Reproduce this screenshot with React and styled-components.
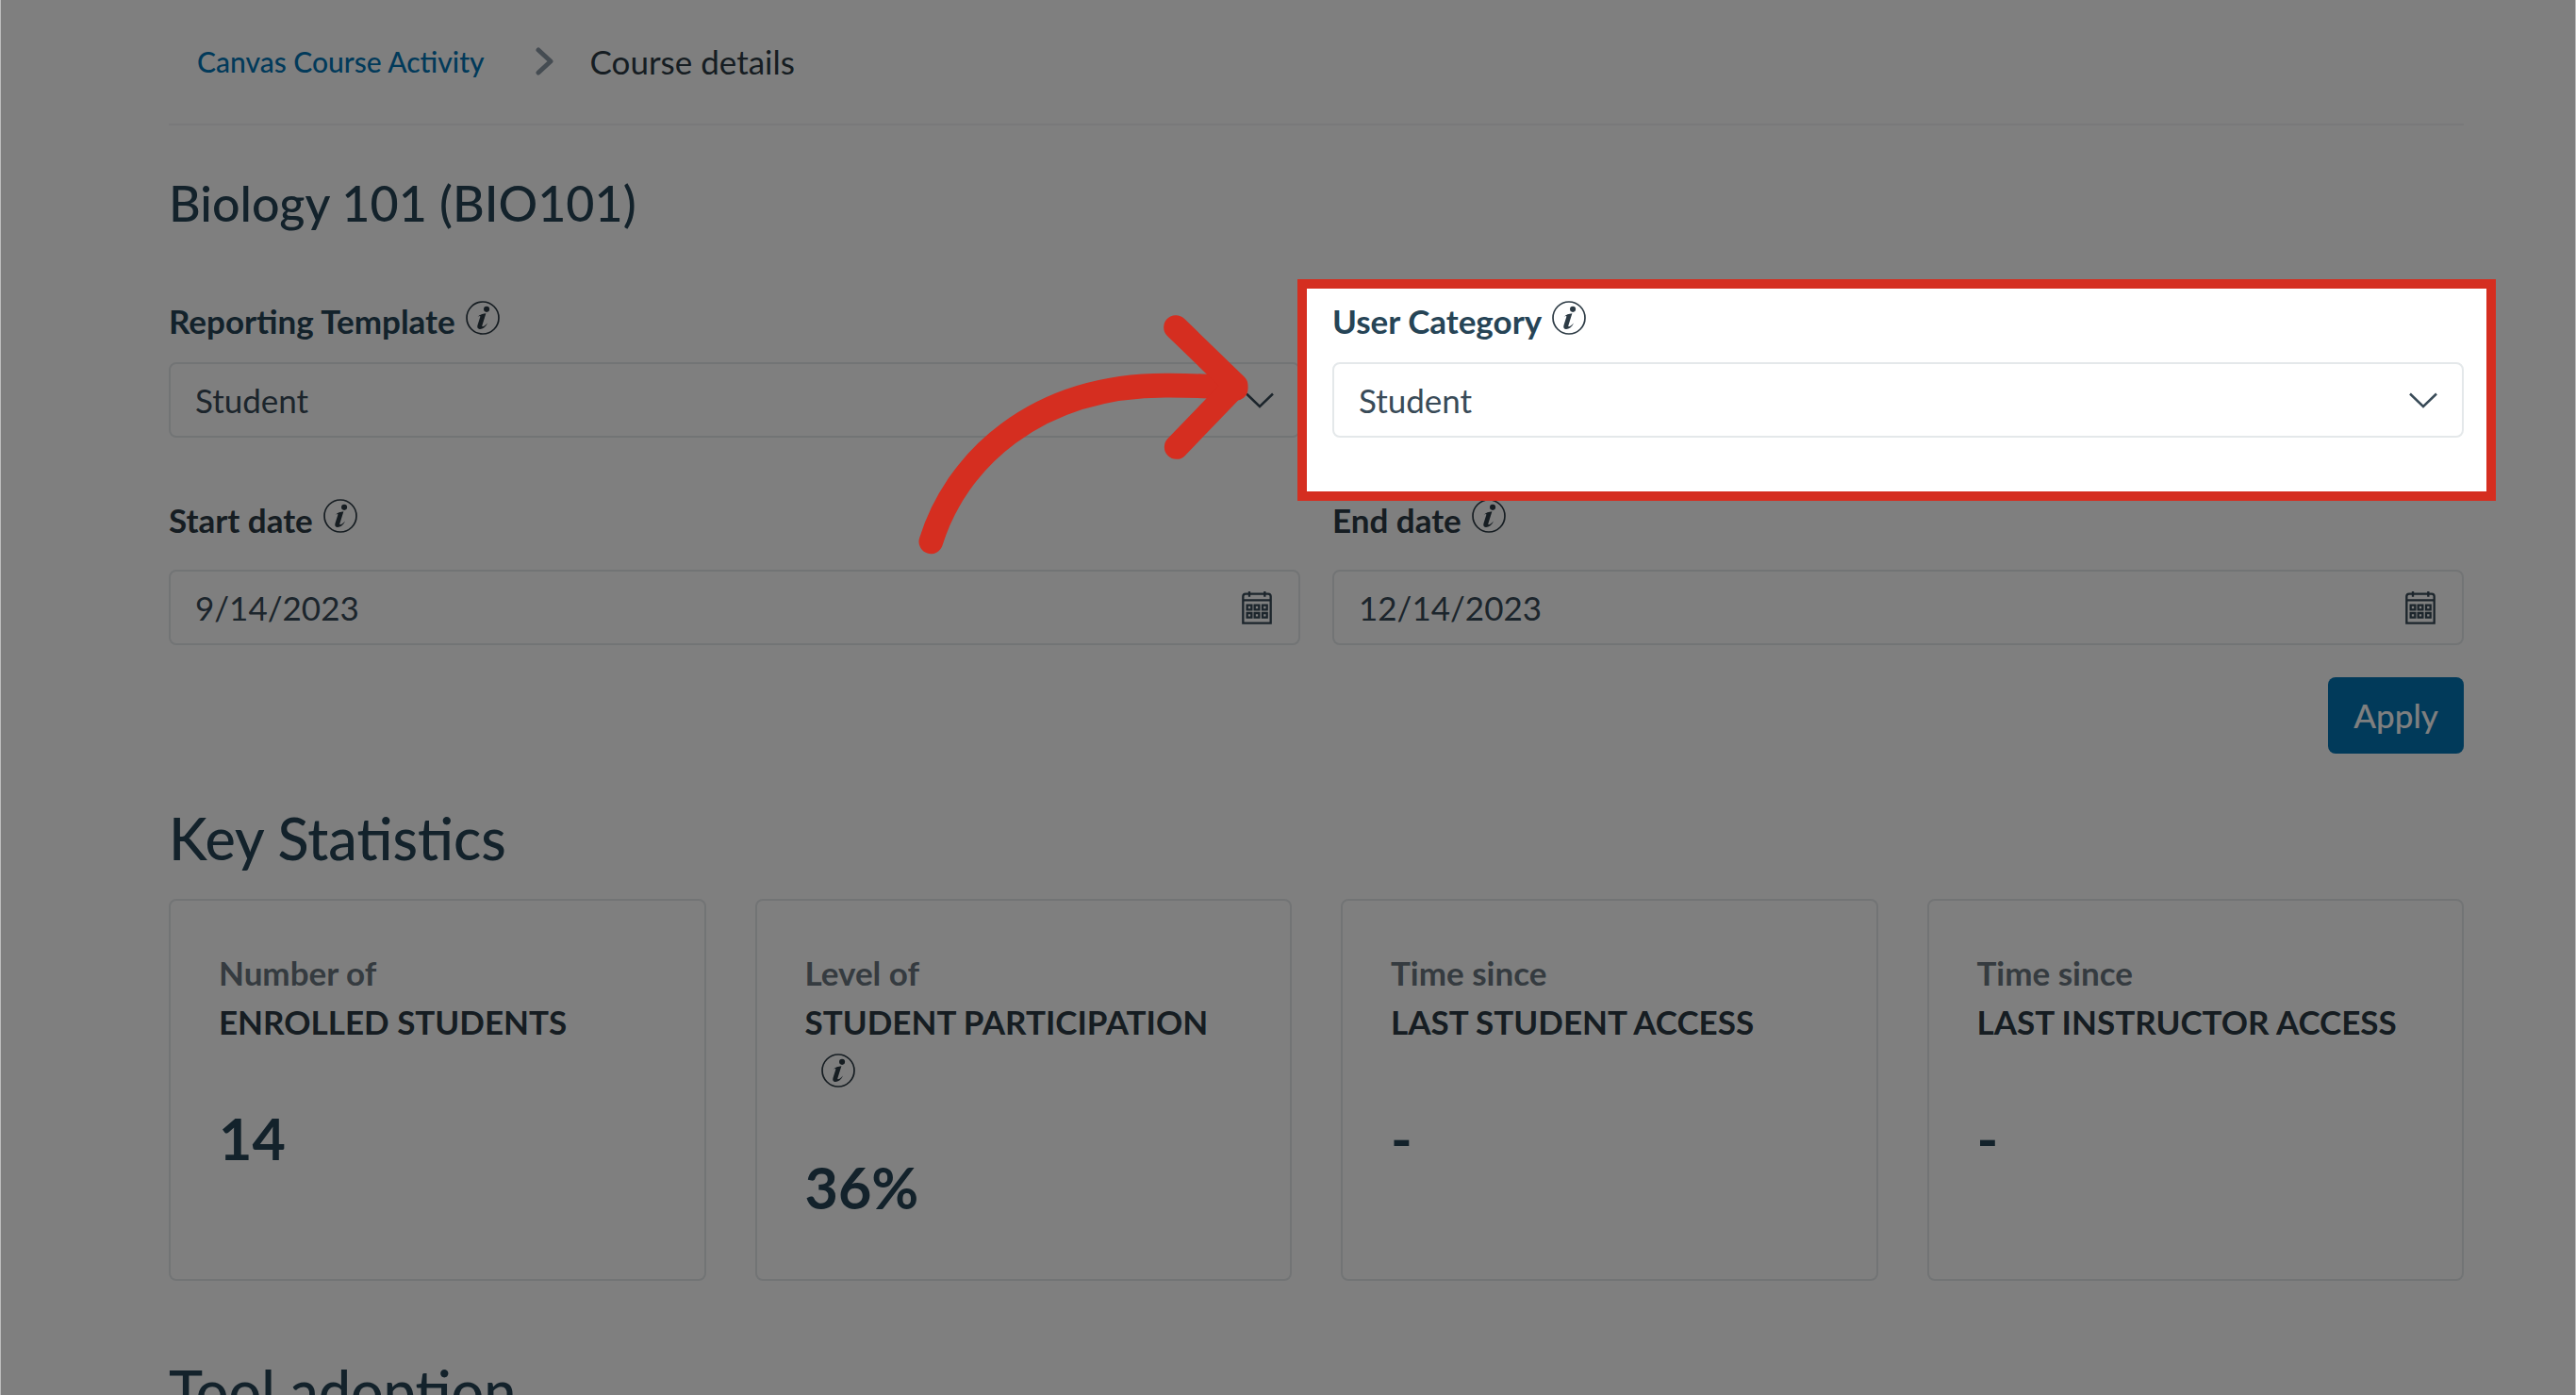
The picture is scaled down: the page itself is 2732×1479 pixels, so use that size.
import React, { useState } from 'react';
import styled, { createGlobalStyle } from 'styled-components';

const GlobalStyle = createGlobalStyle`
  * {
    box-sizing: border-box;
  }
  body {
    margin: 0;
    background: #fff;
    color: #2d3b45;
    font-family: Lato, 'Open Sans', sans-serif;
    font-size: 35px;
  }
  button,
  input,
  select {
    font: inherit;
    color: inherit;
  }
`;

const Page = styled.div`
  height: 100vh;
  overflow: hidden;
  padding: 0 118px 0 178px;
  border: solid #bcbcbc;
  border-width: 0 1px;
`;

const Breadcrumb = styled.nav`
  display: flex;
  align-items: center;
  padding: 40px 30px 41px;
  border-bottom: 2px solid #f2f3f4;
  line-height: 50px;
`;

const CrumbLink = styled.a`
  color: #0374b5;
  font-size: 30px;
  font-weight: 500;
  text-decoration: none;
`;

const CrumbArrow = styled.svg`
  width: 20px;
  height: 30px;
  margin: 0 38px 0 54px;
`;

const Title = styled.h1`
  margin: 50px 0 72px;
  color: #264456;
  font-size: 52px;
  font-weight: 500;
  line-height: 64px;
`;

const Filters = styled.form`
  display: grid;
  grid-template-columns: 1fr 1fr;
  gap: 65px 34px;
`;

const Field = styled.div`
  position: relative;
`;

const LabelRow = styled.div`
  display: flex;
  align-items: flex-start;
  gap: 11px;
  margin-bottom: ${(props) => (props.$date ? 31 : 23)}px;
  color: ${(props) => (props.$date ? '#2d3b45' : '#264456')};
  font-weight: 700;
  line-height: ${(props) => (props.$date ? 44 : 42)}px;
`;

const InfoButton = styled.button`
  display: inline-flex;
  padding: 0;
  border: 0;
  background: none;
  color: #2d3b45;
  cursor: pointer;
  svg {
    width: 36px;
    height: 36px;
  }
`;

const Control = styled.div`
  display: flex;
  align-items: center;
  height: 80px;
  padding-right: 26px;
  border: 2px solid #e4e8ea;
  border-radius: 8px;
`;

const controlReset = `
  flex: 1;
  min-width: 0;
  height: 100%;
  padding: 0 0 0 26px;
  border: 0;
  outline: 0;
  background: none;
  color: #394b58;
`;

const Select = styled.select`
  ${controlReset}
  appearance: none;
`;

const DateInput = styled.input`
  ${controlReset}
`;

const ChevronIcon = styled.svg`
  width: 30px;
  height: 17px;
  pointer-events: none;
`;

const CalendarSvg = styled.svg`
  width: 32px;
  height: 35px;
  margin-right: 2px;
`;

const Actions = styled.div`
  grid-column: 1 / -1;
  display: flex;
  justify-content: flex-end;
  margin-top: -31px;
`;

const ApplyButton = styled.button`
  height: 81px;
  padding: 0 27px 2px;
  border: 0;
  border-radius: 8px;
  background: #0374b5;
  color: #fff;
  font-weight: 500;
  cursor: pointer;
`;

// dims the rest of the page through its spread shadow
const Spotlight = styled.div`
  position: absolute;
  inset: -23px -34px -67px -37px;
  z-index: 2;
  border: 10px solid #d52e20;
  box-shadow: 0 0 0 4000px rgba(0, 0, 0, 0.5);
  pointer-events: none;
`;

const Pointer = styled.svg`
  position: absolute;
  top: 15px;
  right: calc(100% + 89px);
  z-index: 3;
  width: 350px;
  height: 254px;
  pointer-events: none;
`;

const SectionTitle = styled.h2`
  margin: ${(props) => props.$top}px 0 27px;
  color: #264456;
  font-size: 61px;
  font-weight: 500;
  line-height: 74px;
`;

const Cards = styled.div`
  display: grid;
  grid-template-columns: repeat(4, 1fr);
  gap: 52px;
`;

const Card = styled.section`
  padding: 50px 51px 61px;
  border: 2px solid #e4e8ea;
  border-radius: 8px;
`;

const CardHeading = styled.h3`
  margin: 0 0 62px;
  font-size: 35px;
  font-weight: 700;
  line-height: 52px;
`;

const Caption = styled.span`
  display: block;
  color: #6b7780;
`;

const CardInfo = styled.span`
  display: inline-flex;
  align-items: center;
  height: 52px;
  margin-left: 17px;
  vertical-align: top;
`;

const Value = styled.div`
  color: #264456;
  font-size: 61px;
  font-weight: 700;
  line-height: 72px;
`;

const stats = [
  { caption: 'Number of', name: 'ENROLLED STUDENTS', value: '14' },
  {
    caption: 'Level of',
    name: 'STUDENT PARTICIPATION',
    value: '36%',
    info: true,
  },
  { caption: 'Time since', name: 'LAST STUDENT ACCESS', value: '-' },
  { caption: 'Time since', name: 'LAST INSTRUCTOR ACCESS', value: '-' },
];

function Info({ about }) {
  return (
    <InfoButton type='button' aria-label={`About ${about}`}>
      <svg viewBox='0 0 106 106' fill='currentColor'>
        <circle
          cx='53'
          cy='53'
          r='50'
          fill='none'
          stroke='currentColor'
          strokeWidth='5'
        />
        <circle cx='65' cy='26' r='9' />
        <path d='M37 50C43 43 53 40 63 39L51 77C50 82 55 82 68 69C61 83 51 89 43 88C36 87 35 82 37 75L45 50C46 46 42 46 37 50Z' />
      </svg>
    </InfoButton>
  );
}

function SelectField({ id, label, value, onChange, children }) {
  return (
    <Field>
      <LabelRow>
        <label htmlFor={id}>{label}</label>
        <Info about={label} />
      </LabelRow>
      <Control>
        <Select id={id} name={id} value={value} onChange={onChange}>
          <option>Student</option>
          <option>Instructor</option>
        </Select>
        <ChevronIcon viewBox='0 0 30 17' fill='none'>
          <path d='M1 1.5L15 15L29 1.5' stroke='#394b58' strokeWidth='2.5' />
        </ChevronIcon>
      </Control>
      {children}
    </Field>
  );
}

function DateField({ id, label, value, onChange }) {
  return (
    <Field>
      <LabelRow $date>
        <label htmlFor={id}>{label}</label>
        <Info about={label} />
      </LabelRow>
      <Control>
        <DateInput id={id} name={id} value={value} onChange={onChange} />
        <CalendarSvg
          viewBox='0 0 96 105'
          fill='none'
          stroke='#394b58'
          strokeWidth='7'
        >
          <path d='M4 101V16Q4 8 12 8H84Q92 8 92 16V101Z' />
          <path d='M4 28H92M24 0V17M73 0V17' />
          <path d='M17 44h14v14h-14zM41 44h14v14h-14zM66 44h14v14h-14zM17 69h14v14h-14zM41 69h14v14h-14zM66 69h14v14h-14z' />
        </CalendarSvg>
      </Control>
    </Field>
  );
}

export default function App() {
  const [filters, setFilters] = useState({
    template: 'Student',
    category: 'Student',
    start: '9/14/2023',
    end: '12/14/2023',
  });

  const onChange = (e) =>
    setFilters({
      ...filters,
      [e.target.name]: e.target.value,
    });

  return (
    <Page>
      <GlobalStyle />
      <Breadcrumb>
        <CrumbLink href='#courses'>Canvas Course Activity</CrumbLink>
        <CrumbArrow viewBox='0 0 20 30' fill='none'>
          <path
            d='M3 3L16 15L3 27'
            stroke='#8b98a5'
            strokeWidth='5'
            strokeLinecap='round'
            strokeLinejoin='round'
          />
        </CrumbArrow>
        <span>Course details</span>
      </Breadcrumb>

      <Title>Biology 101 (BIO101)</Title>

      <Filters onSubmit={(e) => e.preventDefault()}>
        <SelectField
          id='template'
          label='Reporting Template'
          value={filters.template}
          onChange={onChange}
        />
        <SelectField
          id='category'
          label='User Category'
          value={filters.category}
          onChange={onChange}
        >
          <Spotlight />
          <Pointer
            viewBox='102 102 1050 762'
            fill='none'
            stroke='#d52e20'
            strokeWidth='77'
            strokeLinecap='round'
            strokeLinejoin='round'
          >
            <path d='M142 823C220 570 470 322 900 326C970 326 1040 328 1112 336' />
            <path d='M921 141L1112 326L923 522' />
          </Pointer>
        </SelectField>
        <DateField
          id='start'
          label='Start date'
          value={filters.start}
          onChange={onChange}
        />
        <DateField
          id='end'
          label='End date'
          value={filters.end}
          onChange={onChange}
        />
        <Actions>
          <ApplyButton type='submit'>Apply</ApplyButton>
        </Actions>
      </Filters>

      <SectionTitle $top={53}>Key Statistics</SectionTitle>
      <Cards>
        {stats.map((stat) => (
          <Card key={stat.name}>
            <CardHeading>
              <Caption>{stat.caption}</Caption>
              {stat.name}{' '}
              {stat.info && (
                <CardInfo>
                  <Info about='student participation' />
                </CardInfo>
              )}
            </CardHeading>
            <Value>{stat.value}</Value>
          </Card>
        ))}
      </Cards>

      <SectionTitle $top={80}>Tool adoption</SectionTitle>
    </Page>
  );
}
